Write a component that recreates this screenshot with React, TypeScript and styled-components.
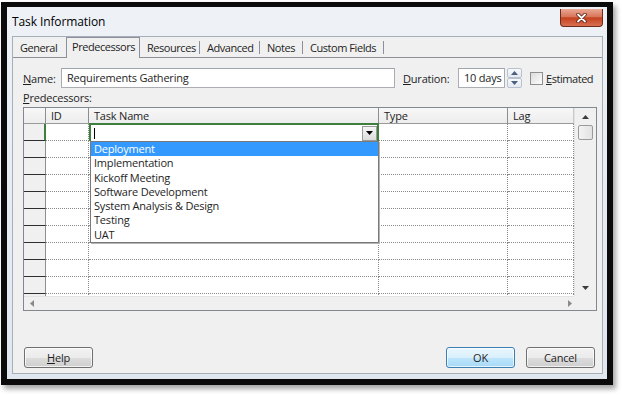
import React from 'react';
import styled, { createGlobalStyle } from 'styled-components';

const GlobalStyle = createGlobalStyle`
  html, body { margin: 0; padding: 0; background: #ffffff; }
  body {
    font-family: "Open Sans", "Noto Sans", sans-serif;
    font-size: 11px;
    letter-spacing: -0.2px;
    color: #1e1e1e;
  }
`;

const Page = styled.div`
  width: 622px;
  height: 396px;
  padding: 2px 0 0 1px;
  box-sizing: border-box;
`;

const Frame = styled.div`
  width: 612px;
  height: 383px;
  box-sizing: border-box;
  border: 6px solid #0b0b0b;
  border-top-width: 5px;
  box-shadow: 3px 4px 5px rgba(0, 0, 0, 0.35);
  display: flex;
  flex-direction: column;
  background: linear-gradient(#eef2f7, #e1e7ef);
`;

const TitleBar = styled.div`
  height: 29px;
  flex: none;
  display: flex;
  align-items: flex-start;
  justify-content: space-between;
  padding-left: 5px;
`;

const Title = styled.div`
  line-height: 29px;
  font-size: 12px;
  letter-spacing: -0.1px;
  color: #000;
`;

const CloseButton = styled.div`
  width: 43px;
  height: 18px;
  margin: 2px 4px 0 0;
  box-sizing: border-box;
  border: 1px solid #6e2a1d;
  border-top: none;
  border-radius: 0 0 4px 4px;
  background: linear-gradient(#eaa996, #d8765a 45%, #c4411f 52%, #d87052);
  display: flex;
  align-items: center;
  justify-content: center;
`;

const Client = styled.div`
  flex: 1;
  margin: 0 4px 5px 5px;
  border: 1px solid #a6afba;
  background: #f0f0f0;
  display: flex;
  flex-direction: column;
`;

const TabStrip = styled.div`
  height: 20px;
  flex: none;
  display: flex;
  align-items: flex-end;
  padding-left: 0;
  border-bottom: 1px solid #8d9099;
`;

const Tab = styled.div<{ $active?: boolean; $sep?: boolean; $w: number }>`
  position: relative;
  width: ${p => p.$w}px;
  height: ${p => (p.$active ? '21px' : '18px')};
  margin-bottom: ${p => (p.$active ? '-1px' : '0')};
  line-height: 18px;
  padding-left: ${p => (p.$active ? '5px' : '7px')};
  box-sizing: border-box;
  letter-spacing: -0.45px;
  white-space: nowrap;
  background: #f0f0f0;
  ${p => p.$active && 'border: 1px solid #8d9099; border-bottom: none; z-index: 1;'}
  ${p =>
    p.$sep &&
    `&::after { content: ''; position: absolute; right: 0; top: 2px; bottom: 3px; width: 1px; background: #8d9099; }`}
`;

const Panel = styled.div`
  flex: 1;
  display: flex;
  flex-direction: column;
  align-items: flex-start;
  padding: 10px 5px 5px 10px;
`;

const FieldRow = styled.div`
  display: flex;
  align-items: center;
  height: 20px;
`;

const Label = styled.div<{ $w: number; $ml?: number }>`
  width: ${p => p.$w}px;
  margin-left: ${p => p.$ml || 0}px;
  white-space: nowrap;
`;

const Key = styled.span`
  text-decoration: underline;
`;

const TextBox = styled.div<{ $w: number }>`
  width: ${p => p.$w}px;
  height: 20px;
  box-sizing: border-box;
  border: 1px solid #abadb3;
  border-top-color: #a0a4ab;
  background: #fff;
  padding-left: 5px;
  line-height: 18px;
  white-space: nowrap;
`;

const Spinner = styled.div`
  width: 15px;
  height: 20px;
  margin-left: 2px;
  display: flex;
  flex-direction: column;
`;

const SpinPart = styled.div`
  flex: 1;
  box-sizing: border-box;
  border: 1px solid #b8c2ce;
  border-radius: 2px;
  background: linear-gradient(#f7f9fc, #e4eaf1);
  display: flex;
  align-items: center;
  justify-content: center;
`;

const CheckBox = styled.div`
  width: 13px;
  height: 13px;
  margin-left: 8px;
  box-sizing: border-box;
  border: 1px solid #8e8f8f;
  background: linear-gradient(135deg, #dcdcdc, #fdfdfd);
`;

const SectionLabel = styled.div`
  margin-top: 3px;
  height: 14px;
  line-height: 14px;
`;

const GridBox = styled.div`
  margin-top: 2px;
  width: 574px;
  height: 204px;
  box-sizing: border-box;
  border: 1px solid #828790;
  background: #fff;
  display: grid;
  grid-template-columns: 550px 22px;
  grid-template-rows: 188px 14px;
`;

const Table = styled.div`
  position: relative;
  display: grid;
  grid-template-columns: 22px 43px 290px 129px 66px;
  grid-template-rows: 16px repeat(11, 17px);
  overflow: hidden;
`;

const HeadCell = styled.div<{ $last?: boolean }>`
  box-sizing: border-box;
  background: linear-gradient(#f7f7f7, #ededed);
  border-right: 1px solid ${p => (p.$last ? '#c9c9c9' : '#8e8e8e')};
  border-bottom: 1px solid #9a9a9a;
  padding-left: 5px;
  line-height: 15px;
`;

const RowHead = styled.div<{ $active?: boolean }>`
  box-sizing: border-box;
  background: #f0f0f0;
  border-bottom: 1px solid #2e2e2e;
  border-right: ${p => (p.$active ? '2px solid #3e7e3e' : '1px solid #8e8e8e')};
`;

const Cell = styled.div`
  box-sizing: border-box;
  border-right: 1px dotted #8a8a8a;
  border-bottom: 1px dotted #8a8a8a;
`;

const EditCell = styled.div`
  position: relative;
  box-sizing: border-box;
  margin-top: -1px;
  border: 2px solid #3e7e3e;
  border-bottom: none;
  background: #fff;
  display: flex;
  align-items: center;
  justify-content: space-between;
  padding: 0 0 0 3px;
  z-index: 2;
`;

const Caret = styled.div`
  width: 1px;
  height: 11px;
  background: #000;
`;

const DropButton = styled.div`
  width: 15px;
  height: 15px;
  box-sizing: border-box;
  border: 1px solid #9a9a9a;
  background: linear-gradient(#f6f6f6, #dcdcdc);
  display: flex;
  align-items: center;
  justify-content: center;
`;

const DropList = styled.div`
  position: absolute;
  left: -1px;
  top: 100%;
  width: 289px;
  box-sizing: border-box;
  border: 1px solid #7a7a7a;
  background: #fff;
  box-shadow: 1px 1px 0 #b5b5b5;
`;

const ListItem = styled.div<{ $selected?: boolean }>`
  height: 14.3px;
  line-height: 14px;
  padding-left: 3px;
  white-space: nowrap;
  background: ${p => (p.$selected ? '#3399ff' : 'transparent')};
  color: ${p => (p.$selected ? '#fff' : '#1e1e1e')};
`;

const VScroll = styled.div`
  background: #f0f0f0;
  border-left: 1px solid #e3e3e3;
  display: flex;
  flex-direction: column;
  align-items: center;
`;

const ScrollArrow = styled.div`
  height: 17px;
  width: 100%;
  display: flex;
  align-items: center;
  justify-content: center;
`;

const Thumb = styled.div`
  width: 15px;
  height: 15px;
  box-sizing: border-box;
  border: 1px solid #9a9a9a;
  border-radius: 2px;
  background: linear-gradient(90deg, #f3f3f3, #e2e2e2);
`;

const HScroll = styled.div`
  background: #f0f0f0;
  border-top: 1px solid #e3e3e3;
  display: flex;
  align-items: center;
  justify-content: space-between;
  padding: 0 2px 0 6px;
`;

const Corner = styled.div`
  background: #f0f0f0;
`;

const Footer = styled.div`
  margin-top: auto;
  width: 100%;
  box-sizing: border-box;
  display: flex;
  align-items: center;
  padding: 0 2px 0 1px;
`;

const Button = styled.div<{ $default?: boolean; $ml?: string }>`
  width: 69px;
  height: 21px;
  box-sizing: border-box;
  margin-left: ${p => p.$ml || '0'};
  border: 1px solid ${p => (p.$default ? '#3c7fb1' : '#707070')};
  border-radius: 3px;
  background: ${p =>
    p.$default
      ? 'linear-gradient(#eaf6fd, #d9f0fc 50%, #bee6fd 51%, #a7d9f5)'
      : 'linear-gradient(#f2f2f2, #ebebeb 50%, #dddddd 51%, #cfcfcf)'};
  box-shadow: inset 0 0 0 1px rgba(255, 255, 255, 0.7);
  text-align: center;
  line-height: 19px;
  color: #1e1e1e;
`;

const Tri = ({ dir, color = '#3c3c3c' }: { dir: 'up' | 'down' | 'left' | 'right'; color?: string }) => {
  const pts = {
    up: '0,4 3.5,0 7,4',
    down: '0,0 7,0 3.5,4',
    left: '4,0 4,7 0,3.5',
    right: '0,0 0,7 4,3.5',
  }[dir];
  const vertical = dir === 'up' || dir === 'down';
  return (
    <svg width={vertical ? 7 : 4} height={vertical ? 4 : 7} viewBox={vertical ? '0 0 7 4' : '0 0 4 7'}>
      <polygon points={pts} fill={color} />
    </svg>
  );
};

const tasks = [
  'Deployment',
  'Implementation',
  'Kickoff Meeting',
  'Software Development',
  'System Analysis & Design',
  'Testing',
  'UAT',
];

const tabs: [string, number][] = [
  ['General', 53],
  ['Predecessors', 74],
  ['Resources', 60],
  ['Advanced', 60],
  ['Notes', 43],
  ['Custom Fields', 81],
];

export default function App() {
  const rows = Array.from({ length: 11 }, (_, i) => i);
  return (
    <Page>
      <GlobalStyle />
      <Frame>
        <TitleBar>
          <Title>Task Information</Title>
          <CloseButton>
            <svg width="11" height="10" viewBox="0 0 11 10">
              <path d="M2 1.5 L9 8.5 M9 1.5 L2 8.5" stroke="#5a1a10" strokeWidth="3.4" strokeLinecap="round" />
              <path d="M2 1.5 L9 8.5 M9 1.5 L2 8.5" stroke="#ffffff" strokeWidth="1.8" strokeLinecap="round" />
            </svg>
          </CloseButton>
        </TitleBar>
        <Client>
          <TabStrip>
            {tabs.map(([t, w], i) => (
              <Tab key={t} $w={w} $active={i === 1} $sep={i > 1}>
                {t}
              </Tab>
            ))}
          </TabStrip>
          <Panel>
            <FieldRow>
              <Label $w={38}>
                <Key>N</Key>ame:
              </Label>
              <TextBox $w={334}>Requirements Gathering</TextBox>
              <Label $w={55} $ml={8}>
                <Key>D</Key>uration:
              </Label>
              <TextBox $w={47}>10 days</TextBox>
              <Spinner>
                <SpinPart>
                  <Tri dir="up" color="#4b5e80" />
                </SpinPart>
                <SpinPart>
                  <Tri dir="down" color="#4b5e80" />
                </SpinPart>
              </Spinner>
              <CheckBox />
              <Label $w={50} $ml={3} style={{ letterSpacing: '-0.45px' }}>
                <Key>E</Key>stimated
              </Label>
            </FieldRow>
            <SectionLabel>
              <Key>P</Key>redecessors:
            </SectionLabel>
            <GridBox>
              <Table>
                <HeadCell />
                <HeadCell>ID</HeadCell>
                <HeadCell>Task Name</HeadCell>
                <HeadCell>Type</HeadCell>
                <HeadCell $last>Lag</HeadCell>
                {rows.map(r => (
                  <React.Fragment key={r}>
                    <RowHead $active={r === 0} />
                    <Cell />
                    {r === 0 ? (
                      <EditCell>
                        <Caret />
                        <DropButton>
                          <Tri dir="down" color="#000" />
                        </DropButton>
                        <DropList>
                          {tasks.map((t, i) => (
                            <ListItem key={t} $selected={i === 0}>
                              {t}
                            </ListItem>
                          ))}
                        </DropList>
                      </EditCell>
                    ) : (
                      <Cell />
                    )}
                    <Cell />
                    <Cell />
                  </React.Fragment>
                ))}
              </Table>
              <VScroll>
                <ScrollArrow>
                  <Tri dir="up" />
                </ScrollArrow>
                <Thumb />
                <div style={{ flex: 1 }} />
                <ScrollArrow>
                  <Tri dir="down" />
                </ScrollArrow>
              </VScroll>
              <HScroll>
                <Tri dir="left" color="#8a8a8a" />
                <Tri dir="right" color="#8a8a8a" />
              </HScroll>
              <Corner />
            </GridBox>
            <Footer>
              <Button>
                <Key>H</Key>elp
              </Button>
              <Button $default $ml="auto">
                OK
              </Button>
              <Button $ml="11px">Cancel</Button>
            </Footer>
          </Panel>
        </Client>
      </Frame>
    </Page>
  );
}
